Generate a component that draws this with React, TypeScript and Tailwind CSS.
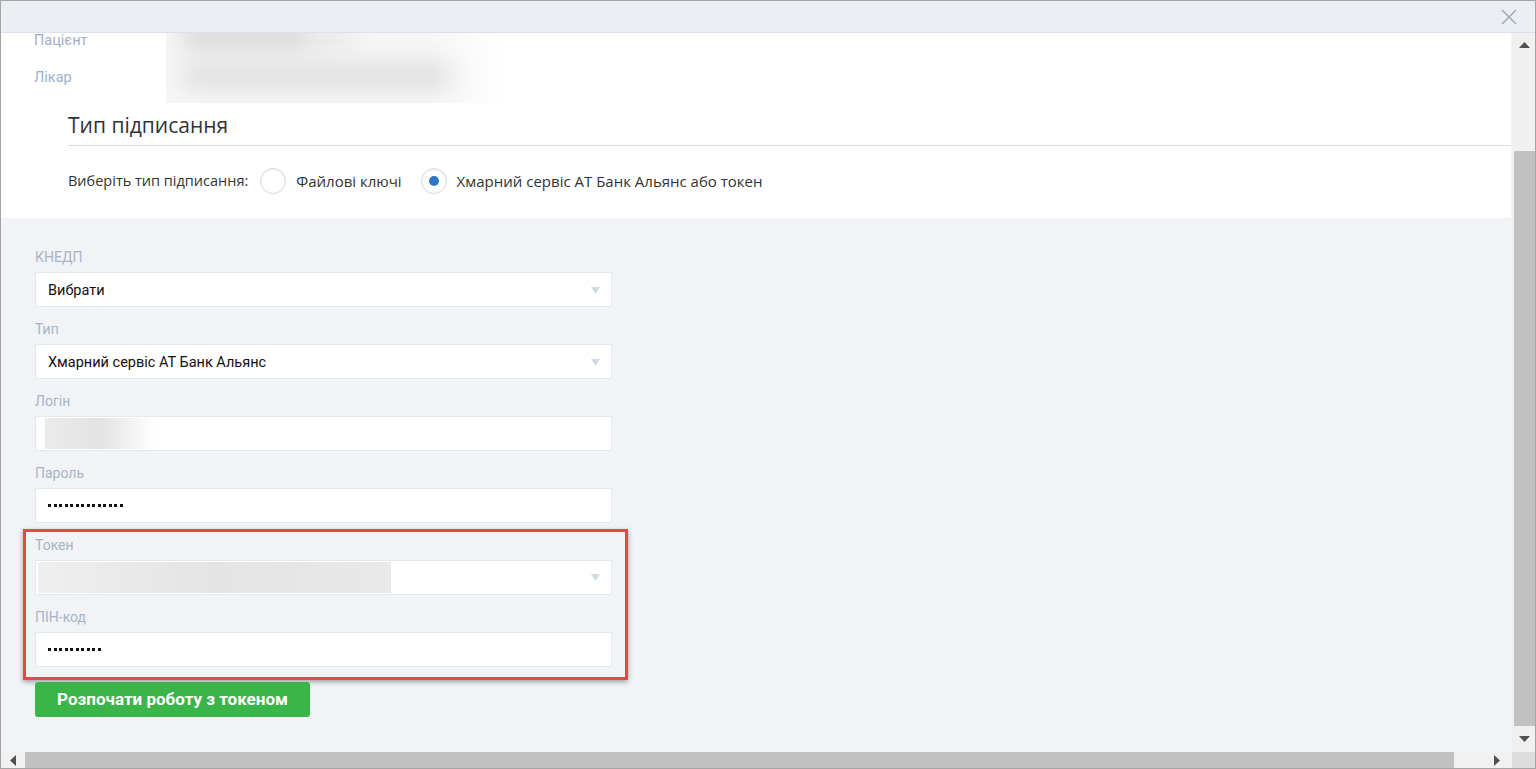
import { useState } from "react";

const roboto = { fontFamily: "Roboto, 'Liberation Sans', sans-serif" };
const openSans = { fontFamily: "'Open Sans', 'Liberation Sans', sans-serif" };

// Маленький сірий трикутник праворуч у селектах.
const SelectArrow = () => (
  <svg width="9" height="7" viewBox="0 0 9 7" className="shrink-0">
    <polygon points="0,0 9,0 4.5,7" fill="#d3d9e2" />
  </svg>
);

// Замаскований пароль: квадратні крапки, як у браузері.
const Dots = ({ count }: { count: number }) => (
  <div className="flex gap-[2.5px]">
    {Array.from({ length: count }).map((_, i) => (
      <span key={i} className="h-[3px] w-[3px] bg-[#111]" />
    ))}
  </div>
);

const FieldLabel = ({ children }: { children: string }) => (
  <div className="mb-[5px] h-[20px] text-[14px] leading-[20px] text-[#a8b3c4]" style={roboto}>
    {children}
  </div>
);

const Radio = ({ checked, label, onClick }: { checked: boolean; label: string; onClick: () => void }) => (
  <button type="button" onClick={onClick} className="flex items-center gap-[10px]">
    <span className="flex h-[26px] w-[26px] items-center justify-center rounded-full border border-[#d9d9d9] bg-white shadow-[inset_0_1px_2px_rgba(0,0,0,0.08)]">
      {checked && <span className="h-[10px] w-[10px] rounded-full bg-[#2f75c1]" />}
    </span>
    <span className="text-[15px] text-[#333]">{label}</span>
  </button>
);

export default function App() {
  const [signType, setSignType] = useState<"file" | "cloud">("cloud");

  return (
    <div className="flex h-[769px] w-[1536px] flex-col overflow-hidden border border-[#a4a4a4] bg-white">
      <header className="flex h-[32px] shrink-0 items-center justify-end border-b border-[#d9e1ec] bg-[#ebeef3] pr-[18px]">
        <svg width="16" height="16" viewBox="0 0 16 16">
          <path d="M1 1 L15 15 M15 1 L1 15" stroke="#a3adba" strokeWidth="1.6" />
        </svg>
      </header>

      <div className="flex min-h-0 flex-1">
        <main className="flex flex-1 flex-col bg-[#f1f3f7]">
          {/* Верхній білий блок: пацієнт, лікар і тип підписання */}
          <section className="mr-[1px] h-[185px] shrink-0 overflow-hidden bg-white" style={openSans}>
            <div className="flex pl-[33px]">
              <div className="-mt-[11px] flex w-[132px] flex-col text-[14.5px] text-[#9cafcb]" style={roboto}>
                <div className="h-[37px] leading-[37px]">Пацієнт</div>
                <div className="h-[37px] leading-[37px]">Лікар</div>
              </div>
              <div className="relative h-[70px] w-[344px] overflow-hidden bg-[#f7f7f7]">
                <div className="absolute left-[14px] top-[-6px] h-[20px] w-[130px] rounded-full bg-[#cfcfcf] blur-md" />
                <div className="absolute left-[130px] top-[-4px] h-[16px] w-[60px] rounded-full bg-[#e2e2e2] blur-md" />
                <div className="absolute left-[14px] top-[30px] h-[26px] w-[280px] rounded-full bg-[#dedede] blur-md" />
                <div className="absolute right-0 top-0 h-full w-[80px] bg-gradient-to-r from-transparent to-white" />
              </div>
            </div>

            <div className="ml-[67px] mt-[8px] border-b border-[#dcdcdc] pb-[6px] text-[21px] leading-[28px] text-[#333]">
              Тип підписання
            </div>

            <div className="ml-[67px] mt-[22px] flex h-[26px] items-center">
              <span className="mr-[12px] text-[14.5px] text-[#333]">Виберіть тип підписання:</span>
              <Radio checked={signType === "file"} label="Файлові ключі" onClick={() => setSignType("file")} />
              <div className="w-[19px]" />
              <Radio checked={signType === "cloud"} label="Хмарний сервіс АТ Банк Альянс або токен" onClick={() => setSignType("cloud")} />
            </div>
          </section>

          {/* Форма хмарного підпису */}
          <section className="flex w-[611px] flex-col pl-[34px] pt-[29px]" style={roboto}>
            <FieldLabel>КНЕДП</FieldLabel>
            <div className="flex h-[35px] items-center justify-between border border-[#e3e7ee] bg-white pl-[12px] pr-[11px] pt-[2px] text-[14.5px] text-[#111]">
              <span>Вибрати</span>
              <SelectArrow />
            </div>

            <div className="mt-[12px]">
              <FieldLabel>Тип</FieldLabel>
            </div>
            <div className="flex h-[35px] items-center justify-between border border-[#e3e7ee] bg-white pl-[12px] pr-[11px] pt-[2px] text-[14.5px] text-[#111]">
              <span>Хмарний сервіс АТ Банк Альянс</span>
              <SelectArrow />
            </div>

            <div className="mt-[12px]">
              <FieldLabel>Логін</FieldLabel>
            </div>
            <div className="flex h-[35px] items-center border border-[#e3e7ee] bg-white pl-[9px]">
              <div className="h-[31px] w-[110px] bg-gradient-to-r from-[#ebebeb] via-[#e3e3e3] to-white" />
            </div>

            <div className="mt-[12px]">
              <FieldLabel>Пароль</FieldLabel>
            </div>
            <div className="flex h-[35px] items-center border border-[#e3e7ee] bg-white pl-[12px]">
              <Dots count={14} />
            </div>

            {/* Червона рамка-виділення навколо токена і ПІН-коду */}
            <div className="-ml-[12px] mt-[6px] w-[605px] border-[3px] border-[#f04545] pb-[10px] pl-[9px] pt-[3px] shadow-[0_2px_5px_rgba(0,0,0,0.35)]">
              <div className="w-[577px]">
                <FieldLabel>Токен</FieldLabel>
                <div className="flex h-[35px] items-center justify-between border border-[#e3e7ee] bg-white pl-[2px] pr-[11px]">
                  <div className="h-[31px] w-[353px] bg-gradient-to-r from-[#efefef] via-[#e4e4e4] to-[#e9e9e9]" />
                  <SelectArrow />
                </div>
                <div className="mt-[12px]">
                  <FieldLabel>ПІН-код</FieldLabel>
                </div>
                <div className="flex h-[35px] items-center border border-[#e3e7ee] bg-white pl-[12px]">
                  <Dots count={10} />
                </div>
              </div>
            </div>

            <button
              type="button"
              className="mt-[2px] h-[35px] w-[275px] rounded-[3px] bg-[#3bb44a] text-[17px] font-bold text-white"
            >
              Розпочати роботу з токеном
            </button>
          </section>
        </main>

        {/* Вертикальна смуга прокрутки */}
        <div className="flex w-[23px] shrink-0 flex-col bg-[#f0f0f0]">
          <div className="flex h-[24px] items-center justify-center pl-[2px]">
            <svg width="11" height="6" viewBox="0 0 11 6"><polygon points="0,6 11,6 5.5,0" fill="#505050" /></svg>
          </div>
          <div className="h-[94px]" />
          <div className="ml-[2px] h-[575px] bg-[#c1c1c1]" />
          <div className="flex flex-1 items-center justify-center pl-[2px]">
            <svg width="11" height="6" viewBox="0 0 11 6"><polygon points="0,0 11,0 5.5,6" fill="#505050" /></svg>
          </div>
        </div>
      </div>

      {/* Горизонтальна смуга прокрутки */}
      <div className="flex h-[16px] shrink-0">
        <div className="flex w-[24px] items-center justify-center bg-[#f1f1f1]">
          <svg width="6" height="11" viewBox="0 0 6 11"><polygon points="6,0 6,11 0,5.5" fill="#505050" /></svg>
        </div>
        <div className="w-[1429px] bg-[#c1c1c1]" />
        <div className="flex flex-1 items-center justify-end bg-[#f1f1f1] pr-[12px]">
          <svg width="6" height="11" viewBox="0 0 6 11"><polygon points="0,0 0,11 6,5.5" fill="#505050" /></svg>
        </div>
        <div className="w-[23px] bg-[#dcdcdc]" />
      </div>
    </div>
  );
}
